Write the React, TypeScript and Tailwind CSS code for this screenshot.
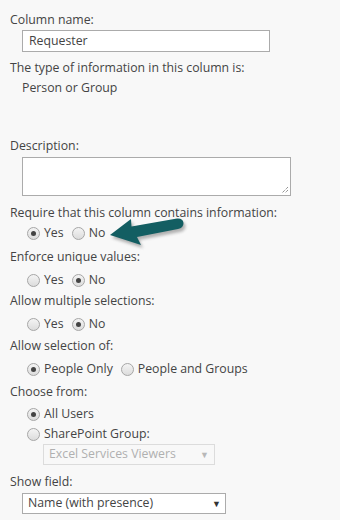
import React from "react";

function Radio({ checked }: { checked?: boolean }) {
  return (
    <span className="relative inline-flex h-[13px] w-[13px] shrink-0 items-center justify-center rounded-full border border-[#a6a6a6] bg-gradient-to-b from-[#f4f4f4] to-[#dcdcdc]">
      {checked && <span className="h-[5px] w-[5px] rounded-full bg-[#444]" />}
    </span>
  );
}

function Opt({ checked, label }: { checked?: boolean; label: string }) {
  return (
    <span className="flex items-center gap-[4px]">
      <Radio checked={checked} />
      <span>{label}</span>
    </span>
  );
}

function Label({ children, className = "" }: { children: React.ReactNode; className?: string }) {
  return <div className={"h-[20px] leading-[20px] pl-[10px] " + className}>{children}</div>;
}

function RadioRow({ children, className = "" }: { children: React.ReactNode; className?: string }) {
  return (
    <div className={"flex h-[20px] items-center gap-[8px] pl-[27px] leading-[20px] " + className}>{children}</div>
  );
}

export default function App() {
  return (
    <div
      className="relative h-[520px] w-[340px] overflow-hidden bg-[#f8f8f8] text-[12.3px] text-[#444]"
      style={{ fontFamily: '"Open Sans", "Noto Sans", sans-serif' }}
    >
      <div className="flex flex-col pt-[10px]">
        <Label>Column name:</Label>
        <div className="ml-[22px] flex h-[22px] w-[248px] items-center border border-[#ababab] bg-white pl-[6px]">
          Requester
        </div>
        <Label className="mt-[6px]">The type of information in this column is:</Label>
        <div className="h-[20px] pl-[22px] leading-[20px]">Person or Group</div>

        <Label className="mt-[38px]">Description:</Label>
        <div className="relative ml-[22px] mt-[1px] h-[39px] w-[269px] border border-[#ababab] bg-white">
          <svg className="absolute bottom-[1px] right-[1px]" width="9" height="9" viewBox="0 0 9 9">
            <path d="M8 2 L2 8 M8 5 L5 8" stroke="#666" strokeWidth="1" strokeDasharray="1 1" />
          </svg>
        </div>

        <Label className="mt-[7px]">Require that this column contains information:</Label>
        <RadioRow>
          <Opt checked label="Yes" />
          <Opt label="No" />
        </RadioRow>

        <Label className="mt-[4px]">Enforce unique values:</Label>
        <RadioRow className="mt-[3px]">
          <Opt label="Yes" />
          <Opt checked label="No" />
        </RadioRow>

        <Label className="mt-[1px]">Allow multiple selections:</Label>
        <RadioRow className="mt-[3px]">
          <Opt label="Yes" />
          <Opt checked label="No" />
        </RadioRow>

        <Label className="mt-[2px]">Allow selection of:</Label>
        <RadioRow className="mt-[3px]">
          <Opt checked label="People Only" />
          <Opt label="People and Groups" />
        </RadioRow>

        <Label className="mt-[3px]">Choose from:</Label>
        <RadioRow className="mt-[2px]">
          <Opt checked label="All Users" />
        </RadioRow>
        <RadioRow className="h-[18px]">
          <Opt label="SharePoint Group:" />
        </RadioRow>
        <div className="ml-[43px] flex h-[21px] w-[172px] items-center justify-between border border-[#dcdcdc] bg-[#f8f8f8] pl-[5px] pr-[5px] text-[#b0b0b0]">
          <span>Excel Services Viewers</span>
          <span className="text-[9px] text-[#b8b8b8]">▼</span>
        </div>

        <Label className="mt-[7px]">Show field:</Label>
        <div className="ml-[22px] mt-[1px] flex h-[21px] w-[204px] items-center justify-between border border-[#ababab] bg-white pl-[5px] pr-[4px]">
          <span>Name (with presence)</span>
          <span className="text-[9px] text-[#333]">▼</span>
        </div>
      </div>

      <svg className="pointer-events-none absolute left-0 top-0" width="340" height="520" viewBox="0 0 340 520">
        <defs>
          <filter id="sh" x="-20%" y="-50%" width="140%" height="200%">
            <feGaussianBlur stdDeviation="1.6" />
          </filter>
        </defs>
        <path
          d="M110 235 L131 219 L131.5 226.5 L177 218.5 Q183 218 183.5 223 Q183.5 228 178 229 L137 237 L141 245 Z"
          fill="#777"
          opacity="0.55"
          filter="url(#sh)"
          transform="translate(2 3)"
        />
        <path
          d="M110 235 L131 219 L131.5 226.5 L177 218.5 Q183 218 183.5 223 Q183.5 228 178 229 L137 237 L141 245 Z"
          fill="#135e62"
        />
      </svg>
    </div>
  );
}
